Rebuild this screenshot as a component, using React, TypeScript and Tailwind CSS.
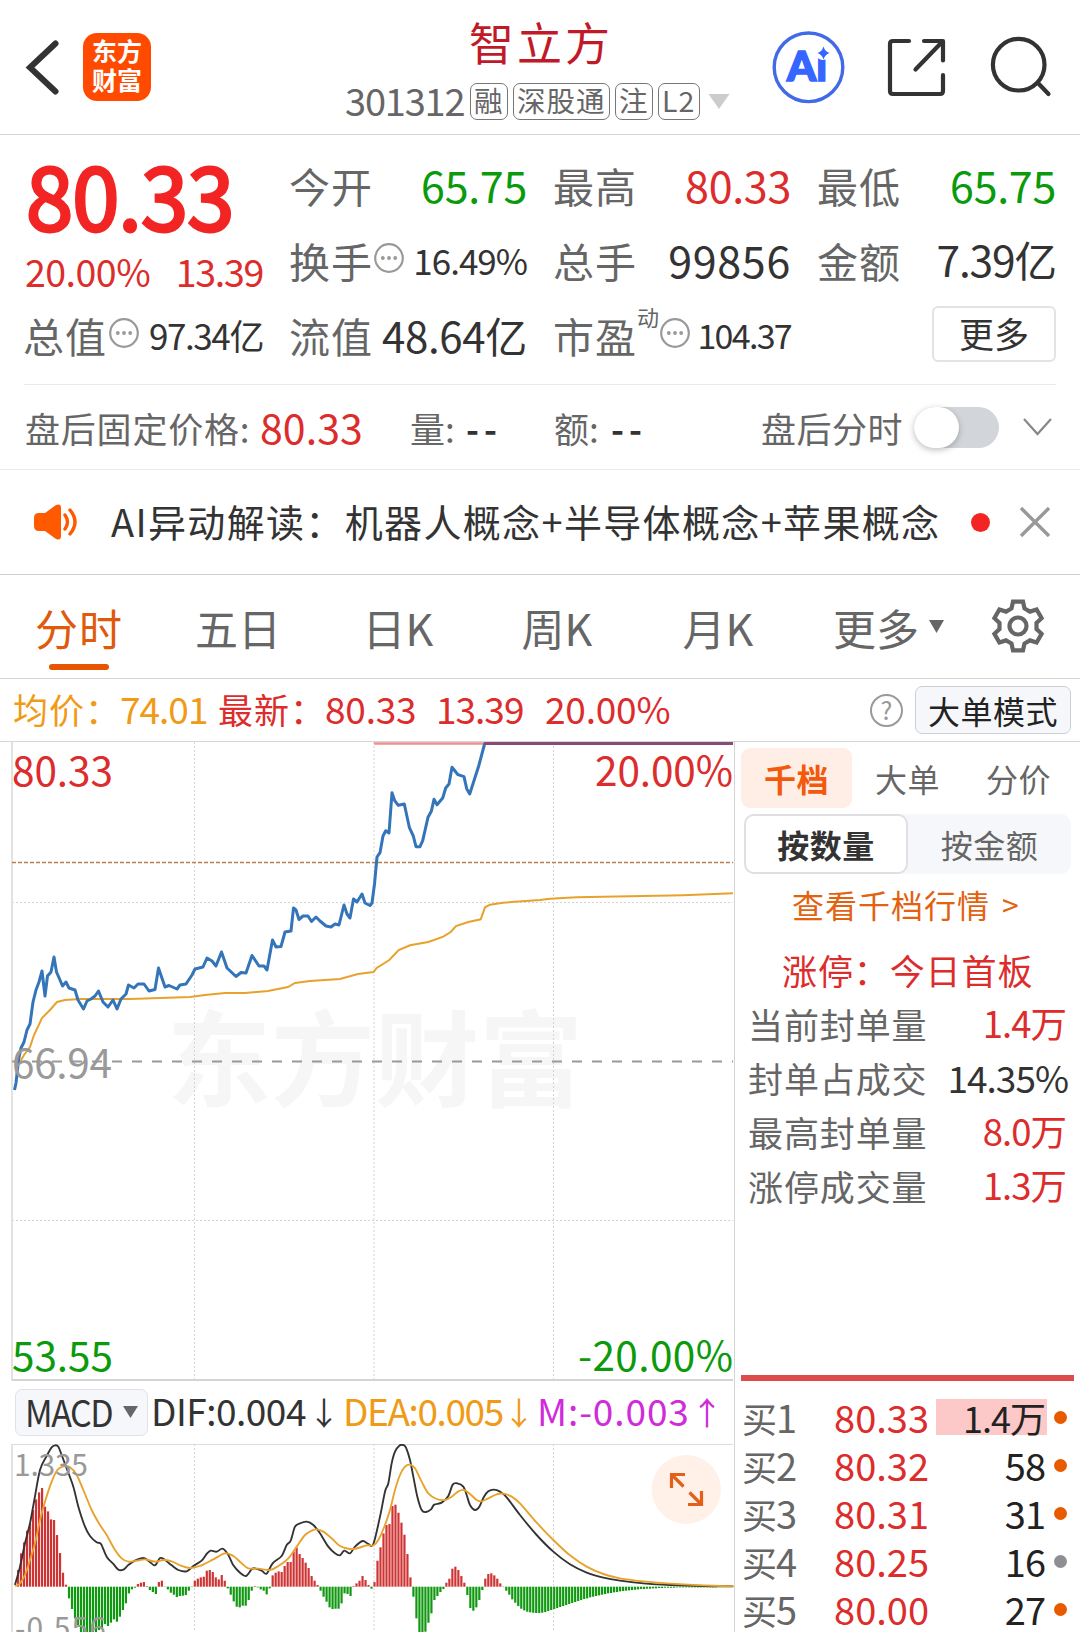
import type { ReactNode } from 'react';

type Point = [number, number];

// Intraday price, chart coordinates (origin at the top left of the plot block)
const PRICE: Point[] = [
  [14.5, 348], [16, 341], [18.5, 318], [21, 306], [24, 300], [27, 288], [30, 282], [33, 260], [36, 248], [39, 240],
  [42, 229], [45, 254], [47.5, 234], [51, 230], [54, 215], [56.5, 230], [60, 238], [62.5, 244], [66, 240], [69, 246],
  [75, 248], [78, 258], [83.5, 267], [87, 259], [91, 257], [95, 254], [98.5, 249], [103, 260], [108, 265], [113, 258],
  [117, 267], [121, 257], [126, 252], [128.5, 243], [134, 246], [138, 242], [144, 242], [149, 249], [155, 247.5],
  [158.5, 226], [165, 245], [169, 243.5], [177, 247], [180, 243], [186, 242], [192, 233], [195, 227], [203, 225],
  [207, 216], [212, 219], [216, 224], [221.5, 210], [227, 226], [236, 234.5], [241, 230.5], [246, 231], [252, 213.5],
  [259, 224], [264, 224], [267, 228], [272.5, 198], [276, 205], [281, 204.5], [285, 190], [291, 189], [293.5, 166],
  [296, 168], [299, 177.5], [303, 174], [308, 174], [311.5, 179.5], [316, 175], [320, 179], [326, 184], [331, 185],
  [335, 182], [339, 183], [344, 163], [347, 172], [350, 176], [353.5, 157], [357, 160], [362, 152], [365, 161],
  [370, 163.5], [372, 161], [374.5, 142], [377, 115], [380, 110.7], [383, 94], [385.7, 88.7], [389, 91], [392, 50.7],
  [394.7, 58.7], [398.3, 63.3], [404.3, 62], [409.3, 85.3], [413.3, 94], [416, 104.7], [420, 104.7], [422.7, 98.7],
  [428, 75.3], [431.3, 69.3], [434, 57.3], [437, 62.7], [442.7, 56], [445.7, 46], [449, 42], [452, 25.3], [458, 32.7],
  [464, 34.7], [466.7, 46.7], [469.7, 52], [478.7, 24], [484.7, 1.5],
];

const AVERAGE: Point[] = [
  [20, 320], [24, 313], [30, 305], [34, 293], [42, 276], [50, 268], [57, 260], [65, 258], [80, 257], [130, 257],
  [190, 255], [205, 253], [225, 251], [245, 251], [268, 249], [288, 245], [295, 241], [310, 239], [340, 237],
  [358, 232], [373.5, 230], [376.7, 226], [389.3, 218], [398.7, 208], [410, 203.3], [428.3, 200], [443.3, 194.7],
  [450.7, 190], [456, 184], [468.3, 180], [480.7, 177.3], [485, 165.3], [490, 162.7], [503, 160.7], [540, 158],
  [550, 156.7], [576.7, 155.3], [683, 153.3], [733, 151.3],
];

// MACD series are stored at three times their drawn size
const DIF: Point[] = [
  [45, 765], [60, 710], [75, 640], [90, 580], [103, 510], [120, 420], [140, 378], [155, 352], [165, 346], [175, 350],
  [185, 375], [200, 415], [220, 470], [235, 530], [255, 590], [270, 618], [290, 637], [303, 642], [320, 680],
  [340, 702], [355, 719], [370, 719], [385, 705], [405, 692], [430, 684], [445, 692], [465, 706], [480, 684],
  [495, 690], [515, 706], [535, 720], [560, 724], [580, 708], [605, 692], [620, 672], [632, 662], [650, 665],
  [668, 656], [685, 675], [700, 706], [720, 728], [738, 738], [755, 718], [765, 715], [785, 722], [800, 731],
  [818, 700], [845, 678], [860, 645], [872, 632], [885, 590], [900, 580], [920, 575], [940, 585], [960, 610],
  [985, 650], [1005, 670], [1020, 676], [1033, 662], [1050, 670], [1065, 650], [1088, 633], [1105, 642], [1120, 642],
  [1140, 560], [1155, 485], [1165, 460], [1175, 400], [1185, 365], [1198, 347], [1210, 345], [1218, 353], [1230, 390],
  [1240, 440], [1252, 500], [1265, 540], [1278, 546], [1293, 538], [1303, 524], [1325, 518], [1345, 498], [1358, 464],
  [1372, 460], [1390, 470], [1400, 495], [1410, 525], [1425, 540], [1438, 530], [1452, 500], [1465, 484], [1482, 479],
  [1500, 485], [1520, 502], [1560, 555], [1610, 615], [1660, 665], [1710, 703], [1760, 728], [1810, 743], [1860, 752],
  [1930, 760], [2010, 765], [2110, 768], [2200, 769],
];

const DEA: Point[] = [
  [45, 768], [60, 760], [75, 735], [90, 690], [105, 640], [120, 570], [135, 515], [155, 455], [172, 420], [190, 409],
  [210, 412], [230, 435], [250, 480], [275, 540], [300, 585], [320, 615], [345, 660], [365, 685], [385, 695],
  [410, 692], [435, 688], [465, 695], [490, 690], [515, 694], [545, 708], [570, 714], [600, 708], [640, 688],
  [675, 670], [700, 678], [725, 700], [745, 715], [775, 716], [810, 720], [835, 708], [865, 685], [890, 650],
  [915, 615], [935, 602], [950, 598], [970, 605], [995, 625], [1020, 648], [1050, 657], [1075, 654], [1100, 646],
  [1120, 646], [1135, 630], [1155, 585], [1170, 540], [1185, 480], [1200, 435], [1215, 410], [1230, 404], [1245, 415],
  [1265, 455], [1285, 490], [1310, 507], [1335, 510], [1355, 500], [1375, 484], [1392, 480], [1410, 492], [1430, 510],
  [1445, 514], [1465, 505], [1490, 493], [1510, 491], [1535, 500], [1560, 520], [1610, 578], [1660, 630], [1710, 676],
  [1760, 710], [1810, 732], [1860, 745], [1930, 754], [2010, 761], [2110, 766], [2200, 769],
];

const BARS = [
  50, 100, 133, 168, 190, 230, 262, 283, 296, 240, 226, 202, 200, 155, 101, 42, 6, -35, -67, -95, -115, -136, -150,
  -158, -155, -150, -140, -130, -125, -112, -118, -108, -98, -105, -90, -70, -50, -20, -8, -3, 8, 12, 14, 2, -10, -16,
  -22, 14, 18, -1, -8, -18, -24, -31, -28, -27, -25, -12, -1, 18, 24, 28, 30, 48, 50, 44, 28, 22, 35, 18, -5, -24,
  -44, -60, -62, -57, -57, -40, -12, 2, -2, -8, -12, -23, -5, 34, 42, 46, 44, 62, 74, 74, 105, 118, 98, 86, 72, 56,
  32, 18, 5, -12, -30, -45, -62, -67, -66, -66, -50, -20, -22, -28, 2, 10, 18, 32, 20, 5, -6, 14, 78, 118, 160, 185,
  188, 242, 246, 222, 192, 156, 98, 28, -30, -95, -140, -150, -135, -108, -80, -40, -28, -16, -7, 12, 24, 54, 60, 50,
  32, 12, -25, -64, -72, -62, -40, -10, 24, 38, 40, 34, 24, 10, -1, -12, -24, -38, -48, -58, -66, -71, -75, -77, -78,
  -79, -79, -78, -76, -73, -70, -67, -64, -61, -58, -55, -52, -49, -46, -43, -40, -37, -35, -32, -30, -28, -26, -24,
  -22, -20, -19, -17, -16, -14, -13, -12, -11, -10, -9, -8, -7, -7, -6, -6, -5, -5, -4, -4, -3, -3, -3, -3, -2, -2,
  -2, -2, -2, -2, -2, -2, -2, -2, -2, -2, -2, -2,
];

const STATUS_ROWS = [
  { label: '当前封单量', value: '1.4万', red: true },
  { label: '封单占成交', value: '14.35%', red: false },
  { label: '最高封单量', value: '8.0万', red: true },
  { label: '涨停成交量', value: '1.3万', red: true },
];

const BIDS = [
  { label: '买1', price: '80.33', volume: '1.4万', active: true, dot: 'bg-[#e85a00]' },
  { label: '买2', price: '80.32', volume: '58', active: false, dot: 'bg-[#e85a00]' },
  { label: '买3', price: '80.31', volume: '31', active: false, dot: 'bg-[#e85a00]' },
  { label: '买4', price: '80.25', volume: '16', active: false, dot: 'bg-[#8e8e93]' },
  { label: '买5', price: '80.00', volume: '27', active: false, dot: 'bg-[#e85a00]' },
];

const toPolyline = (points: Point[]) => points.map((p) => p.join(',')).join(' ');

// Catmull-Rom spline through the points
function toCurve(points: Point[]) {
  let d = `M${points[0][0]} ${points[0][1]}`;
  for (let i = 0; i < points.length - 1; i++) {
    const p0 = points[i - 1] ?? points[i];
    const p1 = points[i];
    const p2 = points[i + 1];
    const p3 = points[i + 2] ?? p2;
    d += `C${p1[0] + (p2[0] - p0[0]) / 6} ${p1[1] + (p2[1] - p0[1]) / 6} ${p2[0] - (p3[0] - p1[0]) / 6} ${
      p2[1] - (p3[1] - p1[1]) / 6
    } ${p2[0]} ${p2[1]}`;
  }
  return d;
}

function MoreDots({ className = '' }: { className?: string }) {
  return (
    <svg viewBox="0 0 30 30" className={`h-[30px] w-[30px] shrink-0 ${className}`} fill="#999">
      <circle cx="15" cy="15" r="13.8" fill="none" stroke="#999" strokeWidth="2.2" />
      <circle cx="8.8" cy="15" r="1.9" />
      <circle cx="15" cy="15" r="1.9" />
      <circle cx="21.2" cy="15" r="1.9" />
    </svg>
  );
}

function Tag({ children }: { children: ReactNode }) {
  return (
    <span className="flex h-[37px] shrink-0 items-center rounded-[7px] border border-[#777] px-[3.5px] pb-[2px] text-[28.5px] tracking-[1px]">
      {children}
    </span>
  );
}

function Header() {
  return (
    <header className="flex h-[135px] items-start border-b border-[#d6d6d6]">
      <svg viewBox="0 0 83 134" className="h-[134px] w-[83px]" fill="none" stroke="#333" strokeWidth="6" strokeLinecap="round">
        <path d="M55.5 43.5 L30 67.5 L55.5 91.5" />
      </svg>
      <div className="mt-[33px] flex h-[68px] w-[68px] flex-col items-center justify-center rounded-[14px] bg-[#ff4a00] pb-[4px] text-[25px] leading-[29px] font-bold text-white">
        <span>东方</span>
        <span>财富</span>
      </div>
      <div className="ml-[194px] flex w-[388px] flex-col">
        <h1 className="mt-[12px] ml-[124px] text-[45px] leading-[60px] tracking-[3px] text-[#c01a28]">智立方</h1>
        <div className="mt-[11px] flex h-[37px] items-center gap-[4.5px] text-[#666]">
          <span className="-mt-[4px] w-[120px] text-[38px] tracking-[-1.2px]">301312</span>
          <Tag>融</Tag>
          <Tag>深股通</Tag>
          <Tag>注</Tag>
          <Tag>L2</Tag>
          <svg viewBox="0 0 22 15" className="ml-[4px] h-[15px] w-[22px] shrink-0">
            <path d="M0.5 0 H21.5 L11 15 Z" fill="#ccc" />
          </svg>
        </div>
      </div>
      <svg viewBox="0 0 80 134" className="ml-[35px] h-[134px] w-[80px]">
        <circle cx="40.5" cy="67.3" r="34.3" fill="none" stroke="#4169e8" strokeWidth="3.4" />
        <text x="19" y="81" fill="#3566ff" stroke="#3566ff" strokeWidth="1.6" fontFamily="Lato, sans-serif" fontWeight="900" fontSize="41" textLength="40" lengthAdjust="spacingAndGlyphs">Ai</text>
        <circle cx="55" cy="53" r="7" fill="#fff" />
        <path d="M55.5 46.5 Q57 51.5 61.5 53 Q57 54.5 55.5 59.5 Q54 54.5 49.5 53 Q54 51.5 55.5 46.5Z" fill="#3566ff" />
      </svg>
      <svg viewBox="848 0 232 134" className="h-[134px] w-[232px]" fill="none" stroke="#333" strokeWidth="4.2" strokeLinecap="round" strokeLinejoin="round">
        <path d="M909 41 H893 Q890 41 890 44 V91 Q890 94 893 94 H940 Q943 94 943 91 V75" />
        <path d="M924 41 H943 V60.5 M942 42 L915.5 69.5" />
        <circle cx="1018.7" cy="64.7" r="25.8" />
        <path d="M1038 83 L1048.5 94" />
      </svg>
    </header>
  );
}

function Stat({ label, value, color = 'text-[#333]', size = 'text-[43px] tracking-[-0.3px]', icon }: { label: string; value: string; color?: string; size?: string; icon?: ReactNode }) {
  return (
    <div className="flex h-[75px] items-center whitespace-nowrap text-[#666]">
      <span className="mt-[1px] -ml-[1px] text-[41px] tracking-[1px]">{label}</span>
      {icon}
      <span className={`ml-auto ${size} ${color}`}>{value}</span>
    </div>
  );
}

function Quote() {
  return (
    <section className="h-[250px] px-6 pt-3">
      <div className="grid grid-cols-[239px_237px_237px_238px] gap-x-[27px]">
        <div className="row-span-2 flex h-[150px] flex-col">
          <span className="mt-[-6px] ml-[2px] w-[240px] origin-left scale-x-[0.965] text-[88px] leading-[104px] tracking-[-1px] text-[#f22424] [-webkit-text-stroke:3px_#f22424]">80.33</span>
          <div className="mt-[4px] flex justify-between text-[37.5px] leading-[44px] tracking-[-0.5px] text-[#dc2c2c]">
            <span className="ml-[1px]">20.00%</span>
            <span className="tracking-[-1.3px]">13.39</span>
          </div>
        </div>
        <Stat label="今开" value="65.75" color="text-[#0b9a0b]" />
        <Stat label="最高" value="80.33" color="text-[#dc2c2c]" />
        <Stat label="最低" value="65.75" color="text-[#0b9a0b]" />
        <Stat label="换手" value="16.49%" size="text-[35px] tracking-[-1px]" icon={<MoreDots className="mt-[-4px] ml-[1px]" />} />
        <Stat label="总手" value="99856" size="text-[43px] tracking-[0.7px]" />
        <Stat label="金额" value="7.39亿" size="text-[42.5px] tracking-[-1.1px]" />
        <Stat label="总值" value="97.34亿" size="text-[35px] tracking-[-1.4px]" icon={<MoreDots className="mt-[-4px] ml-[2px]" />} />
        <Stat label="流值" value="48.64亿" size="text-[42px] tracking-[-0.3px]" />
        <Stat
          label="市盈"
          value="104.37"
          size="text-[34px] tracking-[-1.7px]"
          icon={
            <>
              <span className="-mt-[38px] text-[22px]">动</span>
              <MoreDots className="mt-[-4px] ml-[1px]" />
            </>
          }
        />
        <button className="mt-[9px] ml-auto flex h-[56px] w-[124px] items-center justify-center rounded-md border-2 border-[#e3e3e5] pb-[4px] text-[35px] text-[#333]">更多</button>
      </div>
      <div className="mt-[12px] h-px bg-[#ebebeb]" />
    </section>
  );
}

function AfterHours() {
  return (
    <section className="flex h-[85px] items-center border-b border-[#ebebeb] pl-[25px] text-[35px] whitespace-nowrap text-[#666]">
      <span className="w-[235px] tracking-[0.8px]">盘后固定价格:</span>
      <span className="-mt-[2px] w-[150px] text-[41px] tracking-[0.1px] text-[#dc2c2c]">80.33</span>
      <span className="w-[56px]">量:</span>
      <span className="w-[88px] font-bold tracking-[5px] text-[#333]">--</span>
      <span className="w-[57px]">额:</span>
      <span className="w-[150px] font-bold tracking-[5px] text-[#333]">--</span>
      <span className="w-[153px] tracking-[0.5px]">盘后分时</span>
      <span className="flex h-[41px] w-[85px] items-center rounded-full bg-[#d2d5da]">
        <span className="h-[41px] w-[45px] rounded-full bg-white shadow-[0_2px_6px_rgba(0,0,0,0.25)]" />
      </span>
      <svg viewBox="0 0 30 18" className="ml-[24px] h-[18px] w-[30px]" fill="none" stroke="#888" strokeWidth="2.2">
        <path d="M1 1 L14.5 16 L28 1" />
      </svg>
    </section>
  );
}

function Notice() {
  return (
    <section className="flex h-[105px] items-center border-b border-[#d0d0d0]">
      <svg viewBox="0 0 45 36" className="ml-[34px] h-[36px] w-[45px]" fill="#ff5a00">
        <path d="M5 9 H11 L22 1 Q27 -1 27 4 V32 Q27 37 22 35 L11 27 H5 Q0 27 0 22 V14 Q0 9 5 9Z" />
        <path d="M31 11 Q36 18 31 25 M36 6 Q46 18 36 30" fill="none" stroke="#ff5a00" strokeWidth="3.4" strokeLinecap="round" />
      </svg>
      <span className="-mt-[3px] ml-[32px] w-[860px] text-[38px] tracking-[1.35px] whitespace-nowrap text-[#333]">AI异动解读：机器人概念+半导体概念+苹果概念</span>
      <span className="h-[19px] w-[19px] rounded-full bg-[#f22424]" />
      <svg viewBox="0 0 30 30" className="ml-[30px] h-[30px] w-[30px]" stroke="#999" strokeWidth="3.4">
        <path d="M1 1 L29 29 M29 1 L1 29" />
      </svg>
    </section>
  );
}

function PeriodTabs() {
  return (
    <nav className="flex h-[104px] items-start border-b border-[#d6d6d6] text-[43px] leading-[60px] text-[#666]">
      <div className="flex w-[158px] flex-col items-center pt-[22px] text-[#e05a0c]">
        <span className="tracking-[1px]">分时</span>
        <span className="mt-[7px] h-[6px] w-[60px] rounded-full bg-[#e85500]" />
      </div>
      <span className="w-[160px] pt-[22px] text-center">五日</span>
      <span className="w-[160px] pt-[22px] text-center">日K</span>
      <span className="w-[158px] pt-[22px] text-center">周K</span>
      <span className="w-[164px] pt-[22px] text-center">月K</span>
      <div className="flex w-[160px] pt-[22px] pl-[33px]">
        <span>更多</span>
        <svg viewBox="0 0 15 13" className="mt-[23px] ml-[10px] h-[13px] w-[15px]">
          <path d="M0 0 H15 L7.5 13Z" fill="#666" />
        </svg>
      </div>
      <svg viewBox="-28 -28 56 56" className="mt-[23px] ml-[30px] h-[56px] w-[56px]" fill="none" stroke="#666" strokeWidth="4.2">
        <circle r="8.5" />
        <path d="M-5 -24.3 H5 L6.5 -17.5 L12 -14.4 L18.6 -16.5 L23.6 -7.8 L18.5 -3 V3 L23.6 7.8 L18.6 16.5 L12 14.4 L6.5 17.5 L5 24.3 H-5 L-6.5 17.5 L-12 14.4 L-18.6 16.5 L-23.6 7.8 L-18.5 3 V-3 L-23.6 -7.8 L-18.6 -16.5 L-12 -14.4 L-6.5 -17.5Z" />
      </svg>
    </nav>
  );
}

function PriceSummary() {
  return (
    <section className="flex h-[63px] items-center border-b border-[#d6d6d6] pl-[13px] text-[37px] tracking-[-0.2px] whitespace-nowrap text-[#dc2c2c]">
      <span className="-mt-[4px] w-[107px] text-[35px] tracking-[1px] text-[#ef9b18]">均价：</span>
      <span className="-mt-[4px] w-[98px] tracking-[-1px] text-[#ef9b18]">74.01</span>
      <span className="-mt-[4px] w-[107px] text-[35px] tracking-[1px]">最新：</span>
      <span className="-mt-[4px] w-[111px]">80.33</span>
      <span className="-mt-[4px] w-[109px] tracking-[-1px]">13.39</span>
      <span className="-mt-[4px]">20.00%</span>
      <span className="ml-auto flex h-[33px] w-[33px] items-center justify-center rounded-full border-[2.5px] border-[#999] pb-[2px] text-[25px] tracking-normal text-[#999]">?</span>
      <button className="mr-[9px] ml-[12px] flex h-[48px] w-[156px] items-center justify-center rounded-[7px] border border-[#ccd0d6] bg-[#f6f7fa] pb-[1px] text-[32px] tracking-[0.5px] whitespace-nowrap text-[#222]">大单模式</button>
    </section>
  );
}

function PriceChart() {
  return (
    <svg viewBox="0 0 735 639" className="block h-[639px] w-[735px] overflow-visible" fill="none">
      <text x="167" y="357" fontSize="104" fontWeight="700" fill="#f6f6f6">东方财富</text>
      <path d="M194.5 0 V639 M374 0 V639 M553.5 0 V639 M12 160.5 H733 M12 478.5 H733" stroke="#d4d4d4" strokeDasharray="2 2" />
      <path d="M12 0 V639" stroke="#e2e2e2" strokeWidth="2" />
      <path d="M12 638 H733" stroke="#d4d4d4" strokeWidth="2" />
      <path d="M734.5 0 V639" stroke="#d4d4d4" />
      <path d="M12 319.5 H733" stroke="#999" strokeWidth="2" strokeDasharray="10 10" />
      <path d="M12 120.5 H733" stroke="#b8804f" strokeWidth="1.4" strokeDasharray="4 2" />
      <path d="M374 1.5 H485" stroke="#ec9292" strokeWidth="2.4" />
      <polyline points={toPolyline(AVERAGE)} stroke="#e8a22c" strokeWidth="2" />
      <polyline points={toPolyline(PRICE)} stroke="#3474b8" strokeWidth="3" strokeLinejoin="round" />
      <path d="M484 1.5 H733" stroke="#8a4a78" strokeWidth="3" />
      <g fontSize="40.5">
        <text x="12" y="44" fill="#dc2c2c" textLength="101">80.33</text>
        <text x="595" y="44" fill="#dc2c2c" textLength="138">20.00%</text>
        <text x="12" y="336" fill="#999" textLength="100">66.94</text>
        <text x="12" y="629" fill="#0b9a0b" textLength="101">53.55</text>
        <text x="578" y="629" fill="#0b9a0b" textLength="155">-20.00%</text>
      </g>
    </svg>
  );
}

function IndicatorBar() {
  return (
    <div className="flex h-[63px] w-[735px] items-center border-r border-[#d4d4d4] pl-[15px] text-[37px] tracking-[-0.5px] whitespace-nowrap text-[#333]">
      <button className="flex h-[47px] w-[133px] items-center rounded-[7px] border border-[#dfe2e8] bg-[#f6f7fa] pb-[3px] pl-[9px]">
        <span className="w-[88px] origin-left scale-x-[0.92] tracking-[-1.6px]">MACD</span>
        <svg viewBox="0 0 15 12" className="mt-[1px] ml-[10px] h-[12px] w-[15px]">
          <path d="M0 0 H15 L7.5 12Z" fill="#666" />
        </svg>
      </button>
      <span className="-mt-[4px] ml-[3px] w-[162px]">DIF:0.004</span>
      <span className="-mt-[4px] -ml-[5px] w-[34px] text-[32px]">↓</span>
      <span className="-mt-[4px] ml-[1px] w-[166px] tracking-[-1.4px] text-[#ef9b18]">DEA:0.005</span>
      <span className="-mt-[4px] -ml-[6px] w-[34px] text-[32px] text-[#ef9b18]">↓</span>
      <span className="-mt-[4px] w-[159px] tracking-[0.9px] text-[#d02bd8]">M:-0.003</span>
      <span className="-mt-[4px] -ml-[5px] text-[32px] text-[#d02bd8]">↑</span>
    </div>
  );
}

function MacdChart() {
  return (
    <svg viewBox="0 1444 735 188" className="block h-[188px] w-[735px]" fill="none">
      <path d="M12 1444.5 H733" stroke="#dedede" />
      <path d="M194.5 1444 V1632 M374 1444 V1632 M553.5 1444 V1632" stroke="#d4d4d4" strokeDasharray="2 2" />
      <path d="M12 1444 V1632" stroke="#e2e2e2" strokeWidth="2" />
      <path d="M734.5 1444 V1632" stroke="#d4d4d4" />
      {BARS.map((v, i) => (
        <rect
          key={i}
          x={17 + i * 2.995}
          y={v > 0 ? 1586.7 - v / 3 : 1586.7}
          width="2.2"
          height={Math.abs(v) / 3}
          fill={v > 0 ? '#cf3434' : '#109810'}
        />
      ))}
      <g transform="translate(0 1330) scale(0.33333)">
        <path d={toCurve(DIF)} stroke="#333" strokeWidth="5.6" />
        <path d={toCurve(DEA)} stroke="#e8a22c" strokeWidth="5.6" />
      </g>
      <g fontSize="30" fill="#999">
        <text x="14" y="1476" textLength="74">1.335</text>
        <text x="15" y="1639" textLength="91">-0.556</text>
      </g>
      <circle cx="686.3" cy="1489.5" r="34.5" fill="#fff0e8" />
      <path d="M685 1474.5 H671.5 V1488 M672 1475 L683.5 1486.5 M688 1504.5 H701.5 V1491 M701 1504 L689.5 1492.5" stroke="#e2601a" strokeWidth="3.2" />
    </svg>
  );
}

function OrderPanel() {
  return (
    <aside className="flex w-[345px] flex-col text-[#666]">
      <div className="mt-[6px] ml-[6px] flex h-[60px] text-[32px] tracking-[0.5px]">
        <span className="flex w-[111px] items-center justify-center rounded-[9px] bg-[#ffeee6] font-bold text-[#f2590d]">千档</span>
        <span className="flex w-[111px] items-center justify-center">大单</span>
        <span className="flex w-[111px] items-center justify-center">分价</span>
      </div>
      <div className="mt-[6px] ml-[9px] flex h-[60px] w-[327px] rounded-[10px] bg-[#f6f7fa] text-[32px] tracking-[0.5px]">
        <span className="flex w-[164px] items-center justify-center rounded-[10px] border-2 border-[#e0e0e2] bg-white font-bold text-[#333]">按数量</span>
        <span className="flex w-[163px] items-center justify-center">按金额</span>
      </div>
      <a className="mt-[6px] ml-[57px] flex h-[48px] items-center gap-[12px] text-[32px] tracking-[1px] text-[#e2620f]">
        查看千档行情 <span className="text-[30px]">&gt;</span>
      </a>
      <div className="mt-[15px] ml-[47px] h-[53px] text-[35px] leading-[54px] tracking-[0.9px] text-[#dc2c2c]">涨停：今日首板</div>
      {STATUS_ROWS.map((row) => (
        <div key={row.label} className="flex h-[54px] items-center pr-[12px] pl-[13px] whitespace-nowrap">
          <span className="text-[35px] tracking-[0.9px]">{row.label}</span>
          <span className={`ml-auto tracking-[-1px] ${row.red ? 'pr-[2px] text-[36.5px] text-[#dc2c2c]' : 'text-[37px] text-[#333]'}`}>{row.value}</span>
        </div>
      ))}
      <div className="mt-auto ml-[6px] h-[6px] w-[333px] bg-[#dc4c4c]" />
      <div className="mt-[12px] h-[239px]">
        {BIDS.map((bid) => (
          <div key={bid.label} className="flex h-[48px] items-center pl-[7px] text-[38px] tracking-[-1px]">
            <span className="w-[72px] whitespace-nowrap"><span className="text-[35px]">买</span>{bid.label.slice(1)}</span>
            <span className="w-[115px] text-right tracking-[0px] text-[#dc2c2c]">{bid.price}</span>
            <span className={`ml-[7px] flex h-[36px] w-[111px] items-center justify-end pr-[2px] text-[#222] ${bid.active ? 'bg-[#fcc8c8] text-[36px]' : ''}`}>{bid.volume}</span>
            <span className={`ml-[7px] h-[13px] w-[13px] rounded-full ${bid.dot}`} />
          </div>
        ))}
      </div>
    </aside>
  );
}

export default function App() {
  return (
    <main className="h-[1632px] w-[1080px] overflow-hidden bg-white font-['Noto_Sans_CJK_SC',sans-serif] leading-none">
      <Header />
      <Quote />
      <AfterHours />
      <Notice />
      <PeriodTabs />
      <PriceSummary />
      <div className="flex h-[890px]">
        <div className="w-[735px] shrink-0">
          <PriceChart />
          <IndicatorBar />
          <MacdChart />
        </div>
        <OrderPanel />
      </div>
    </main>
  );
}
